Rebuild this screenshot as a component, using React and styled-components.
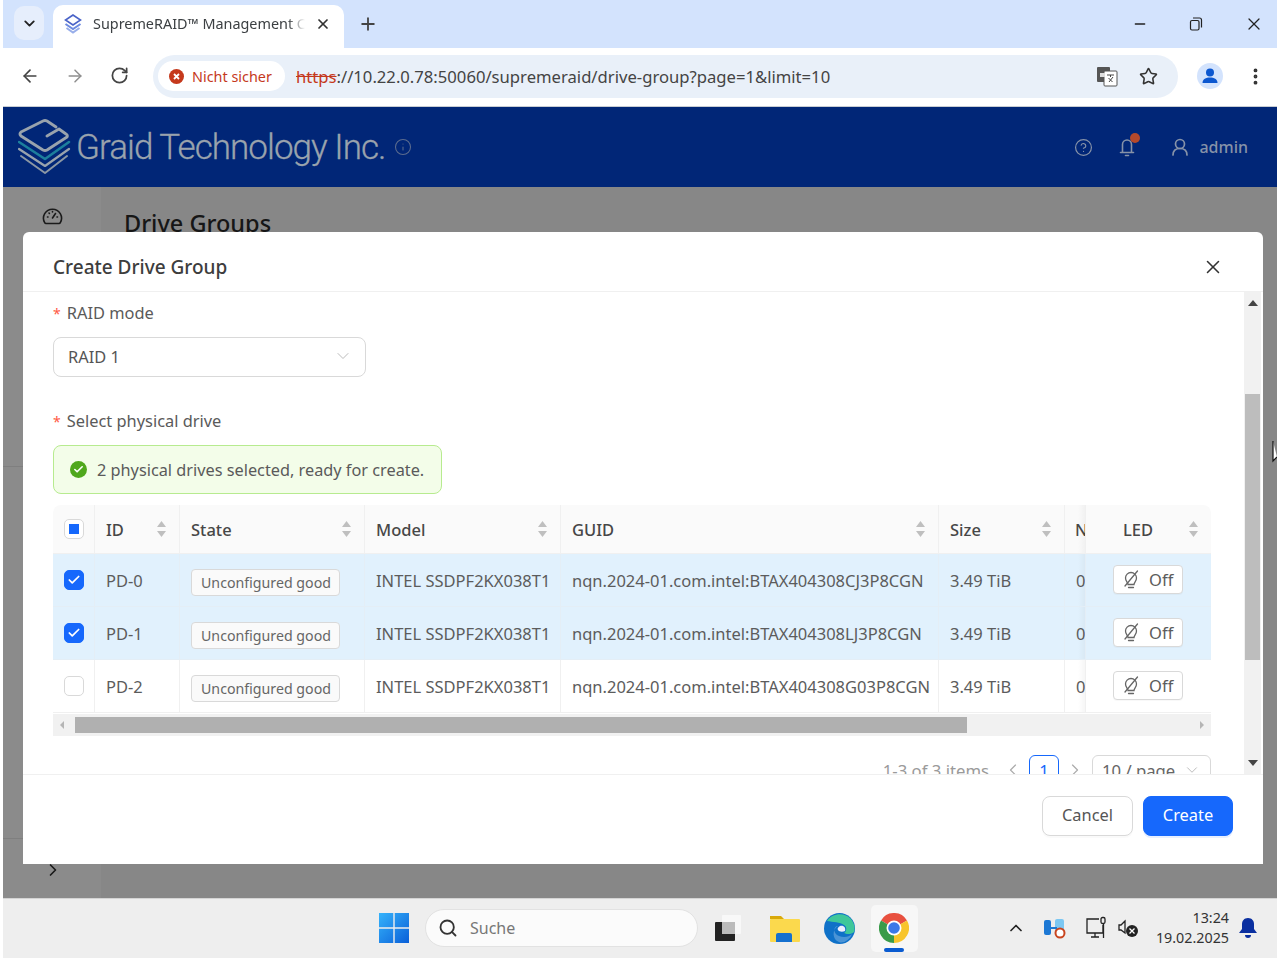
import React from 'react';
import styled, { createGlobalStyle } from 'styled-components';
import { ArrowLeft, ArrowRight, RotateCw, Star, EllipsisVertical, Minus, X, Plus, ChevronDown, ChevronLeft, ChevronUp, ChevronRight, CircleHelp, Search, Check, Info } from 'lucide-react';

const Global = createGlobalStyle`
  html, body { margin: 0; padding: 0; background: #fff; }
  body { font-family: "Noto Sans", "Liberation Sans", sans-serif; color: #333; }
  * { box-sizing: border-box; }
`;

const Screen = styled.div`
  position: relative;
  width: 1277px;
  height: 965px;
  padding: 0 0 7px 3px;
  display: flex;
  flex-direction: column;
  overflow: hidden;
  background: #fff;
`;

/* browser chrome */
const TabStrip = styled.div`
  height: 48px;
  flex: none;
  background: #d3e3fd;
  display: flex;
  align-items: flex-end;
  padding-left: 11px;
`;
const TabListBtn = styled.div`
  width: 30px;
  height: 34px;
  margin: 0 9px 8px 0;
  border-radius: 10px;
  background: #e6eefc;
  display: flex;
  align-items: center;
  justify-content: center;
  color: #222;
`;
const Tab = styled.div`
  width: 291px;
  height: 43px;
  background: #fff;
  border-radius: 10px 10px 0 0;
  display: flex;
  align-items: center;
  padding: 0 0 6px 11px;
  font-size: 14.4px;
  color: #3c4043;
`;
const TabTitle = styled.span`
  margin: 0 10px 0 11px;
  width: 212px;
  white-space: nowrap;
  overflow: hidden;
  -webkit-mask-image: linear-gradient(to right, #000 92%, transparent);
  mask-image: linear-gradient(to right, #000 92%, transparent);
`;
const NewTab = styled.div`
  margin: 0 0 14px 14px;
  color: #444;
  display: flex;
`;
const WindowBtns = styled.div`
  margin-left: auto;
  height: 48px;
  display: flex;
  align-items: center;
  padding-right: 13px;
  gap: 41px;
  color: #222;
`;
const Toolbar = styled.div`
  height: 59px;
  flex: none;
  background: #fff;
  border-bottom: 1px solid #c8cdd4;
  display: flex;
  align-items: center;
  padding: 0 10px 2px 17px;
  color: #474747;
`;
const NavIcons = styled.div`
  display: flex;
  gap: 25px;
  width: 133px;
`;
const NavIcon = styled.span`
  display: flex;
  color: ${p => (p.$dim ? '#8f8f8f' : '#444')};
`;
const Omnibox = styled.div`
  width: 1025px;
  height: 43px;
  border-radius: 22px;
  background: #e9f0f9;
  display: flex;
  align-items: center;
  padding: 0 20px 0 5px;
`;
const Chip = styled.div`
  width: 127px;
  height: 30px;
  border-radius: 15px;
  background: #fff;
  display: flex;
  align-items: center;
  gap: 8px;
  padding-left: 11px;
  font-size: 14.4px;
  color: #c5391c;
  white-space: nowrap;
`;
const Url = styled.div`
  margin-left: 11px;
  font-size: 16.65px;
  color: #444;
  white-space: nowrap;
`;
const Https = styled.span`
  color: #c5391c;
  text-decoration: line-through;
`;
const OmniIcons = styled.div`
  margin-left: auto;
  display: flex;
  align-items: center;
  gap: 21px;
  color: #333;
`;
const Profile = styled.div`
  margin-left: 19px;
  display: flex;
`;
const Kebab = styled.div`
  margin-left: 22px;
  display: flex;
  color: #333;
`;

/* app behind the dialog */
const AppBar = styled.header`
  height: 80px;
  flex: none;
  background: #012677;
  display: flex;
  align-items: center;
  padding: 0 29px 0 15px;
  color: #8692a8;
`;
const Brand = styled.div`
  margin-left: 4px;
  font-family: Roboto, "Liberation Sans", sans-serif;
  font-size: 35px;
  font-weight: 300;
  letter-spacing: -0.95px;
  color: #9aa3ad;
  -webkit-text-stroke: 0.3px #9aa3ad;
  white-space: nowrap;
`;
const BrandInfo = styled.span`
  margin: 0 0 0 8px;
  display: flex;
  color: #5c6c8e;
`;
const AppActions = styled.div`
  margin-left: auto;
  display: flex;
  align-items: center;
  font-size: 16px;
  font-weight: 500;
`;
const BellWrap = styled.span`
  position: relative;
  display: flex;
  margin: 0 36px 0 25px;
`;
const Dot = styled.i`
  position: absolute;
  right: -4px;
  top: -4px;
  width: 10px;
  height: 10px;
  border-radius: 50%;
  background: #b5492b;
`;
const AdminName = styled.span`
  margin-left: 11px;
`;
const Workspace = styled.div`
  flex: 1;
  min-height: 0;
  display: flex;
  background: #878787;
`;
const Sidebar = styled.aside`
  width: 98px;
  background: #8b8b8b;
  display: flex;
  flex-direction: column;
  justify-content: space-between;
  color: #1a1a1a;
`;
const SideTop = styled.div`
  height: 280px;
  border-bottom: 1px solid #7f7f7f;
  padding-top: 19px;
  display: flex;
  justify-content: center;
`;
const SideFoot = styled.div`
  height: 60px;
  border-top: 1px solid #7f7f7f;
  padding: 21px 0 0 2px;
  display: flex;
  justify-content: center;
`;
const PageTitle = styled.h1`
  margin: 21px 0 0 23px;
  font-size: 23.5px;
  font-weight: 500;
  line-height: 30px;
  color: #161616;
`;

/* dialog */
const Modal = styled.div`
  position: absolute;
  left: 23px;
  top: 232px;
  width: 1240px;
  height: 632px;
  background: #fff;
  border-radius: 6px 6px 0 0;
  display: flex;
  flex-direction: column;
  overflow: hidden;
`;
const ModalHead = styled.div`
  height: 60px;
  flex: none;
  border-bottom: 1px solid #f0f0f0;
  display: flex;
  align-items: center;
  justify-content: space-between;
  padding: 10px 39px 0 30px;
  font-size: 19px;
  font-weight: 500;
  color: #3d3d3d;
`;
const ModalBody = styled.div`
  flex: 1;
  min-height: 0;
  display: flex;
`;
const Scroller = styled.div`
  flex: 1;
  min-width: 0;
  overflow: hidden;
  padding: 10px 0 0 30px;
`;
const VBar = styled.div`
  width: 17px;
  margin-right: 2px;
  background: #f1f1f1;
  display: flex;
  flex-direction: column;
  align-items: center;
  justify-content: space-between;
  padding: 8px 0;
  position: relative;
`;
const VThumb = styled.div`
  position: absolute;
  left: 1px;
  top: 102px;
  width: 15px;
  height: 266px;
  background: #bdbdbd;
`;
const Label = styled.div`
  display: flex;
  align-items: baseline;
  gap: 6px;
  font-size: 16.4px;
  line-height: 22px;
  color: #5a5a5a;
  margin-bottom: 12px;
`;
const Star2 = styled.span`
  color: #ff5a45;
  font-size: 14px;
`;
const Select = styled.div`
  width: 313px;
  height: 40px;
  border: 1px solid #d9d9d9;
  border-radius: 8px;
  display: flex;
  align-items: center;
  justify-content: space-between;
  padding: 0 12px 2px 14px;
  font-size: 16.4px;
  color: #555;
  margin-bottom: 33px;
`;
const Alert = styled.div`
  width: 389px;
  height: 49px;
  border: 1px solid #b7eb8f;
  border-radius: 8px;
  background: #f3fde9;
  display: flex;
  align-items: center;
  gap: 10px;
  padding-left: 16px;
  font-size: 16.3px;
  color: #5a5a5a;
  white-space: nowrap;
  margin-bottom: 11px;
`;
const OkDot = styled.span`
  width: 17px;
  height: 17px;
  border-radius: 50%;
  background: #4fa81c;
  color: #fff;
  display: flex;
  align-items: center;
  justify-content: center;
`;
const Table = styled.table`
  width: 1158px;
  table-layout: fixed;
  border-collapse: separate;
  border-spacing: 0;
  font-size: 16.5px;
  color: #5c5c5c;
`;
const Th = styled.th`
  position: relative;
  height: 49px;
  padding: 0 0 0 ${p => p.$pad || 11}px;
  background: #fafafa;
  border-right: 1px solid #f0f0f0;
  border-bottom: 1px solid #f0f0f0;
  font-weight: 500;
  text-align: left;
  color: #474747;
  white-space: nowrap;
  overflow: hidden;
  &:first-child { border-top-left-radius: 8px; }
  &:last-child { border-top-right-radius: 8px; border-right: 0; }
`;
const Td = styled.td`
  position: relative;
  height: 53px;
  padding: 0 0 0 11px;
  background: ${p => (p.$sel ? '#e1f1fd' : '#fff')};
  border-right: 1px solid ${p => (p.$sel ? '#e4eef6' : '#f0f0f0')};
  border-bottom: 1px solid ${p => (p.$sel ? '#e4eef6' : '#f0f0f0')};
  white-space: nowrap;
  overflow: hidden;
  &:last-child { border-right: 0; }
`;
const Fade = styled.i`
  position: absolute;
  right: 0;
  top: 0;
  bottom: 0;
  width: 7px;
  background: linear-gradient(to right, rgba(0, 0, 0, 0), rgba(0, 0, 0, 0.035));
`;
const SortWrap = styled.span`
  position: absolute;
  right: 12px;
  top: 15px;
  display: flex;
`;
const Box = styled.span`
  width: 20px;
  height: 20px;
  border-radius: 5px;
  display: flex;
  align-items: center;
  justify-content: center;
  color: #fff;
  background: ${p => (p.$on ? '#1668fc' : '#fff')};
  border: 1px solid ${p => (p.$on ? '#1668fc' : '#d9d9d9')};
`;
const Partial = styled.i`
  width: 10px;
  height: 10px;
  background: #1668fc;
`;
const Tag = styled.span`
  display: inline-flex;
  align-items: center;
  width: 149px;
  height: 27px;
  padding-left: 9px;
  margin-top: 5px;
  border: 1px solid #d9d9d9;
  border-radius: 4px;
  background: #fafafa;
  font-size: 14.2px;
  color: #666;
`;
const LedBtn = styled.span`
  display: flex;
  align-items: center;
  width: 70px;
  height: 29px;
  margin: -1px 0 0 16px;
  padding-left: 8px;
  gap: 9px;
  border: 1px solid #d9d9d9;
  border-radius: 4px;
  background: #fff;
  box-shadow: 0 1px 1px rgba(0, 0, 0, 0.03);
  color: #5c5c5c;
`;
const HBar = styled.div`
  width: 1158px;
  height: 22px;
  margin-top: 1px;
  background: #f1f1f1;
  display: flex;
  align-items: center;
  padding: 0 6px;
`;
const HThumb = styled.div`
  width: 892px;
  height: 16px;
  margin: 0 auto 0 10px;
  background: #b0b0b0;
`;
const Pager = styled.div`
  margin-top: 19px;
  width: 1158px;
  height: 30px;
  display: flex;
  align-items: center;
  justify-content: flex-end;
  font-size: 16.7px;
  color: #9a9a9a;
`;
const PagePrev = styled(ChevronLeft)`
  margin-left: 14px;
`;
const PageNum = styled.span`
  width: 30px;
  height: 30px;
  margin: 0 6px;
  border: 1px solid #1668fc;
  border-radius: 6px;
  display: flex;
  align-items: center;
  justify-content: center;
  color: #1668fc;
`;
const PageSize = styled.span`
  width: 119px;
  height: 30px;
  margin-left: 7px;
  padding: 0 9px;
  border: 1px solid #d9d9d9;
  border-radius: 6px;
  display: flex;
  align-items: center;
  justify-content: space-between;
  color: #666;
`;
const ModalFoot = styled.div`
  height: 90px;
  flex: none;
  border-top: 1px solid #f0f0f0;
  display: flex;
  justify-content: flex-end;
  gap: 10px;
  padding: 21px 30px 0 0;
`;
const Button = styled.button`
  width: ${p => (p.$primary ? 90 : 91)}px;
  height: 40px;
  padding: 0 0 3px;
  border-radius: 8px;
  border: 1px solid ${p => (p.$primary ? '#1668fc' : '#d9d9d9')};
  background: ${p => (p.$primary ? '#1668fc' : '#fff')};
  color: ${p => (p.$primary ? '#fff' : '#555')};
  box-shadow: 0 2px 0 ${p => (p.$primary ? 'rgba(5,95,255,0.1)' : 'rgba(0,0,0,0.02)')};
  font: 400 16.4px "Noto Sans", sans-serif;
`;

/* taskbar */
const Taskbar = styled.div`
  height: 60px;
  flex: none;
  background: #eeeeee;
  border-top: 1px solid #d4d4d4;
  display: flex;
  align-items: center;
  padding: 0 0 1px 376px;
`;
const Search2 = styled.div`
  width: 273px;
  height: 38px;
  margin-left: 16px;
  border-radius: 19px;
  background: #fbfbfb;
  border: 1px solid #e2e2e2;
  display: flex;
  align-items: center;
  gap: 12px;
  padding-left: 12px;
  font-size: 16px;
  color: #777;
`;
const TaskSlot = styled.div`
  margin-left: ${p => p.$ml}px;
  display: flex;
`;
const ActiveTile = styled.div`
  position: relative;
  width: 47px;
  height: 47px;
  margin-left: 16px;
  border-radius: 5px;
  background: #f7f7f7;
  display: flex;
  align-items: center;
  justify-content: center;
  padding-right: 2px;
  &::after {
    content: '';
    position: absolute;
    left: 13px;
    bottom: 0;
    width: 20px;
    height: 4px;
    border-radius: 2px;
    background: #0a5bd0;
  }
`;
const Tray = styled.div`
  margin-left: auto;
  display: flex;
  align-items: center;
  color: #222;
  padding-right: 19px;
`;
const TrayItem = styled.span`
  margin-left: ${p => p.$ml}px;
  display: flex;
`;
const Clock = styled.div`
  margin: 0 9px 0 18px;
  text-align: right;
  font-size: 14.3px;
  line-height: 20px;
  color: #333;
`;
const Cursor = styled.svg`
  position: absolute;
  left: 1272px;
  top: 440px;
`;

const Sort = () => (
  <SortWrap>
    <svg width="11" height="18" viewBox="0 0 11 18"><path d="M5.5 1 10 7H1z" fill="#bfbfbf" /><path d="M5.5 17 1 11h9z" fill="#bfbfbf" /></svg>
  </SortWrap>
);

const GraidLogo = () => (
  <svg width="54" height="56" viewBox="0 0 54 56" fill="none" strokeLinecap="round" strokeLinejoin="round">
    <path d="M38 8 29 2Q27 1 25 2L3 13Q1 15 3 17L25 31Q27 32 29 31L49 18Q50 16 48 15L41 10 29 17" stroke="#99a3ad" strokeWidth="2.8" />
    <path d="M1 23 27 40 51 23" stroke="#1d7f9c" strokeWidth="2.6" />
    <path d="M1 30 27 47 51 30" stroke="#99a3ad" strokeWidth="2.2" />
    <path d="M3 37 27 54 49 37" stroke="#8b97a4" strokeWidth="2" />
  </svg>
);

const TabLogo = () => (
  <svg width="18" height="20" viewBox="0 0 18 20" fill="none">
    <path d="M9 1 1.5 6 9 11l7.5-5z" stroke="#4a63c8" strokeWidth="1.6" />
    <path d="M1.5 10 9 15l7.5-5" stroke="#6d8be0" strokeWidth="2" />
    <path d="M2.5 14 9 18.5l6.5-4.5" stroke="#98aeea" strokeWidth="2" />
  </svg>
);

const Restore = () => (
  <svg width="14" height="14" viewBox="0 0 14 14" fill="none" stroke="#222" strokeWidth="1.2">
    <rect x="1.5" y="3.5" width="8.5" height="9.5" rx="1.5" />
    <path d="M4 1h6.5A2 2 0 0 1 12.5 3v7.5" />
  </svg>
);

const Translate = () => (
  <svg width="22" height="22" viewBox="0 0 22 22">
    <rect x="1" y="2" width="13" height="15" rx="1" fill="#555" />
    <rect x="8" y="6" width="13" height="15" rx="1" fill="#fff" stroke="#555" />
    <path d="M4 8h5v4H4z" fill="#ddd" />
    <path d="M11 10h7M14.5 10v2M17 12l-4 5M12.5 13l4 4" stroke="#444" strokeWidth="1" fill="none" />
  </svg>
);

const Avatar = () => (
  <svg width="26" height="26" viewBox="0 0 26 26">
    <circle cx="13" cy="13" r="13" fill="#d3e3fd" />
    <circle cx="13" cy="9.5" r="4" fill="#0b57d0" />
    <path d="M5.5 20c0-4 3.5-5.500 7.500-5.500s7.500 1.500 7.500 5.500z" fill="#0b57d0" />
  </svg>
);

const Gauge = () => (
  <svg width="21" height="20" viewBox="0 0 21 20" fill="none" stroke="#1a1a1a" strokeWidth="1.6" strokeLinecap="round">
    <path d="M4 17.500a1.500 1.500 0 0 1-1.300-.8A9 9 0 1 1 18.300 16.700a1.500 1.500 0 0 1-1.300.8z" strokeLinejoin="round" />
    <path d="M10.500 12l3-4.500M5.500 11h.5M15 11h.5M10.500 5.500V6M7 7l.4.4" />
  </svg>
);

const HeaderBell = () => (
  <svg width="18" height="20" viewBox="0 0 18 20" fill="none" stroke="currentColor" strokeWidth="1.6" strokeLinecap="round">
    <path d="M4.500 15V7.500a4.500 4.500 0 0 1 9 0V15" />
    <path d="M2.500 15.500h13M7.500 18.500h3" />
  </svg>
);

const HeaderUser = () => (
  <svg width="16" height="18" viewBox="0 0 16 18" fill="none" stroke="currentColor" strokeWidth="1.7" strokeLinecap="round">
    <circle cx="8" cy="6" r="4.500" />
    <path d="M1 17c0-4.500 3-6.500 7-6.500s7 2 7 6.500" />
  </svg>
);

const LedOff = () => (
  <svg width="18" height="20" viewBox="0 0 18 20" fill="none" stroke="#666" strokeWidth="1.3" strokeLinecap="round">
    <path d="M6 14.500c0-2-2.500-3-2.500-6.500a5.500 5.500 0 0 1 11 0c0 3.500-2.500 4.500-2.500 6.500z" />
    <path d="M6.500 17.500h5M3 16 15.500 1" />
  </svg>
);

const WinLogo = () => (
  <svg width="30" height="30" viewBox="0 0 30 30">
    <defs>
      <linearGradient id="wg" x1="0" y1="0" x2="1" y2="1"><stop offset="0" stopColor="#35b3fb" /><stop offset="1" stopColor="#0a5fd8" /></linearGradient>
    </defs>
    <path d="M0 0h14.300v14.300H0zM15.700 0H30v14.300H15.700zM0 15.700h14.300V30H0zM15.700 15.700H30V30H15.700z" fill="url(#wg)" />
  </svg>
);

const TaskView = () => (
  <svg width="28" height="28" viewBox="0 0 28 28">
    <rect x="8" y="1" width="19" height="19" rx="1" fill="#f8f8f8" />
    <rect x="1" y="8" width="20" height="19" rx="1" fill="#222" />
    <rect x="8" y="8" width="13" height="12" fill="#bbb" />
  </svg>
);

const Folder = () => (
  <svg width="30" height="30" viewBox="0 0 30 30">
    <path d="M0 3h11l3 3H0z" fill="#d9a90a" />
    <rect x="0" y="6" width="30" height="23" rx="1" fill="#fbd94d" />
    <path d="M6 29v-7a2 2 0 0 1 2-2h12a2 2 0 0 1 2 2v7z" fill="#1570cf" />
  </svg>
);

const Edge = () => (
  <svg width="31" height="31" viewBox="0 0 31 31">
    <circle cx="15.500" cy="15.500" r="15.500" fill="#0f71c8" />
    <path d="M3 8C7 1 20-2 27 6c4 5 4 10 3 13-3 3-8 2-10 1 3-2 3-6 0-8-4-3-11-3-17-4z" fill="#3fc79a" />
    <path d="M14 13c-5 0-5 8 1 10 5 2 10 1 13-2-2 6-9 10-13 8-7-2-7-13-1-16z" fill="#fff" opacity="0.25" />
    <path d="M16 13c4-1 6 2 5 5-2 1-6 1-7-1-1-1 0-3 2-4z" fill="#eef" />
  </svg>
);

const ChromeLogo = () => (
  <svg width="30" height="30" viewBox="0 0 30 30">
    <path d="M15 15 2 7.500A15 15 0 0 1 28 7.500z" fill="#e8503f" />
    <path d="M15 15 28 7.500A15 15 0 0 1 15 30z" fill="#f8c52c" />
    <path d="M15 15 15 30A15 15 0 0 1 2 7.500z" fill="#3a9b4a" />
    <circle cx="15" cy="15" r="7.500" fill="#fff" />
    <circle cx="15" cy="15" r="5.800" fill="#3b78e7" />
  </svg>
);

const TrayNet = () => (
  <svg width="24" height="22" viewBox="0 0 24 22">
    <rect x="1" y="3" width="7" height="15" rx="2" fill="#1c78d4" />
    <rect x="12" y="2" width="9" height="13" rx="2" fill="#7cc7f2" />
    <path d="M6 11h8" stroke="#1c78d4" strokeWidth="2" />
    <circle cx="17" cy="16" r="4.500" fill="#fff" stroke="#c9451f" strokeWidth="2" />
  </svg>
);

const TrayMonitor = () => (
  <svg width="22" height="24" viewBox="0 0 22 24" fill="none" stroke="#222" strokeWidth="1.3">
    <path d="M14 3H2v14h16V9" />
    <path d="M6 21h8M10 17v4M18.500 8v14" />
    <rect x="16" y="1.500" width="4" height="6" rx="1.500" />
  </svg>
);

const TraySound = () => (
  <svg width="20" height="20" viewBox="0 0 20 20">
    <path d="M7 3 3 7H1v5h2l4 3z" fill="none" stroke="#222" strokeWidth="1.300" />
    <circle cx="14" cy="13" r="6" fill="#222" />
    <path d="M11.500 10.500l5 5M16.500 10.500l-5 5" stroke="#fff" strokeWidth="1.300" />
  </svg>
);

const rows = [
  { id: 'PD-0', guid: 'nqn.2024-01.com.intel:BTAX404308CJ3P8CGN', sel: true },
  { id: 'PD-1', guid: 'nqn.2024-01.com.intel:BTAX404308LJ3P8CGN', sel: true },
  { id: 'PD-2', guid: 'nqn.2024-01.com.intel:BTAX404308G03P8CGN', sel: false },
];

export default function App() {
  return (
    <Screen>
      <Global />
      <TabStrip>
        <TabListBtn><ChevronDown size={17} strokeWidth={2.6} /></TabListBtn>
        <Tab>
          <TabLogo />
          <TabTitle>SupremeRAID™ Management Console</TabTitle>
          <X size={16} strokeWidth={2.6} color="#333" />
        </Tab>
        <NewTab><Plus size={20} strokeWidth={2.2} /></NewTab>
        <WindowBtns>
          <Minus size={16} strokeWidth={2} />
          <Restore />
          <X size={20} strokeWidth={1.5} />
        </WindowBtns>
      </TabStrip>
      <Toolbar>
        <NavIcons>
          <NavIcon><ArrowLeft size={20} strokeWidth={2} /></NavIcon>
          <NavIcon $dim><ArrowRight size={20} strokeWidth={1.8} /></NavIcon>
          <NavIcon><RotateCw size={19} strokeWidth={2.2} /></NavIcon>
        </NavIcons>
        <Omnibox>
          <Chip>
            <svg width="15" height="15" viewBox="0 0 15 15"><circle cx="7.500" cy="7.500" r="7.500" fill="#c5391c" /><path d="M5 5l5 5M10 5l-5 5" stroke="#fff" strokeWidth="1.800" /></svg>
            Nicht sicher
          </Chip>
          <Url><Https>https</Https>://10.22.0.78:50060/supremeraid/drive-group?page=1&amp;limit=10</Url>
          <OmniIcons>
            <Translate />
            <Star size={19} strokeWidth={2} />
          </OmniIcons>
        </Omnibox>
        <Profile><Avatar /></Profile>
        <Kebab><EllipsisVertical size={21} strokeWidth={2.4} /></Kebab>
      </Toolbar>
      <AppBar>
        <GraidLogo />
        <Brand>Graid Technology Inc.</Brand>
        <BrandInfo><Info size={18} strokeWidth={1.4} /></BrandInfo>
        <AppActions>
          <CircleHelp size={19} strokeWidth={1.5} />
          <BellWrap><HeaderBell /><Dot /></BellWrap>
          <HeaderUser />
          <AdminName>admin</AdminName>
        </AppActions>
      </AppBar>
      <Workspace>
        <Sidebar>
          <SideTop><Gauge /></SideTop>
          <SideFoot><ChevronRight size={20} strokeWidth={2} /></SideFoot>
        </Sidebar>
        <PageTitle>Drive Groups</PageTitle>
      </Workspace>
      <Taskbar>
        <WinLogo />
        <Search2><Search size={20} strokeWidth={2.2} color="#333" />Suche</Search2>
        <TaskSlot $ml={16}><TaskView /></TaskSlot>
        <TaskSlot $ml={28}><Folder /></TaskSlot>
        <TaskSlot $ml={24}><Edge /></TaskSlot>
        <ActiveTile><ChromeLogo /></ActiveTile>
        <Tray>
          <ChevronUp size={20} strokeWidth={2} />
          <TrayItem $ml={17}><TrayNet /></TrayItem>
          <TrayItem $ml={18}><TrayMonitor /></TrayItem>
          <TrayItem $ml={11}><TraySound /></TrayItem>
          <Clock>13:24<br />19.02.2025</Clock>
          <svg width="20" height="22" viewBox="0 0 20 22"><path d="M10 1c-4 0-6 3-6 6v5l-3 4h18l-3-4V7c0-3-2-6-6-6z" fill="#0a2fa0" /><path d="M7 18a3 3 0 0 0 6 0z" fill="#0a2fa0" /></svg>
        </Tray>
      </Taskbar>

      <Modal>
        <ModalHead>
          Create Drive Group
          <X size={22} strokeWidth={1.7} color="#333" />
        </ModalHead>
        <ModalBody>
          <Scroller>
            <Label><Star2>*</Star2>RAID mode</Label>
            <Select>RAID 1<ChevronDown size={20} strokeWidth={1.1} color="#b5b5b5" /></Select>
            <Label><Star2>*</Star2>Select physical drive</Label>
            <Alert>
              <OkDot><Check size={11} strokeWidth={3.5} /></OkDot>
              2 physical drives selected, ready for create.
            </Alert>
            <Table>
              <colgroup>
                <col width="42" /><col width="85" /><col width="185" /><col width="196" /><col width="378" /><col width="126" /><col width="21" /><col width="125" />
              </colgroup>
              <thead>
                <tr>
                  <Th><Box><Partial /></Box></Th>
                  <Th>ID<Sort /></Th>
                  <Th>State<Sort /></Th>
                  <Th>Model<Sort /></Th>
                  <Th>GUID<Sort /></Th>
                  <Th>Size<Sort /></Th>
                  <Th $pad={10}>N<Fade /></Th>
                  <Th $pad={37}>LED<Sort /></Th>
                </tr>
              </thead>
              <tbody>
                {rows.map(r => (
                  <tr key={r.id}>
                    <Td $sel={r.sel}><Box $on={r.sel}>{r.sel && <Check size={14} strokeWidth={3} />}</Box></Td>
                    <Td $sel={r.sel}>{r.id}</Td>
                    <Td $sel={r.sel}><Tag>Unconfigured good</Tag></Td>
                    <Td $sel={r.sel}>INTEL SSDPF2KX038T1</Td>
                    <Td $sel={r.sel}>{r.guid}</Td>
                    <Td $sel={r.sel}>3.49 TiB</Td>
                    <Td $sel={r.sel}>0<Fade /></Td>
                    <Td $sel={r.sel}><LedBtn><LedOff />Off</LedBtn></Td>
                  </tr>
                ))}
              </tbody>
            </Table>
            <HBar>
              <svg width="6" height="10" viewBox="0 0 6 10"><path d="M5 1v8L1 5z" fill="#b5b5b5" /></svg>
              <HThumb />
              <svg width="6" height="10" viewBox="0 0 6 10"><path d="M1 1v8l4-4z" fill="#b5b5b5" /></svg>
            </HBar>
            <Pager>
              1-3 of 3 items
              <PagePrev size={20} strokeWidth={1.4} color="#aaa" />
              <PageNum>1</PageNum>
              <ChevronRight size={20} strokeWidth={1.4} color="#aaa" />
              <PageSize>10 / page<ChevronDown size={18} strokeWidth={1.2} color="#b5b5b5" /></PageSize>
            </Pager>
          </Scroller>
          <VBar>
            <svg width="10" height="6" viewBox="0 0 10 6"><path d="M5 0l5 6H0z" fill="#444" /></svg>
            <VThumb />
            <svg width="10" height="6" viewBox="0 0 10 6"><path d="M5 6 0 0h10z" fill="#444" /></svg>
          </VBar>
        </ModalBody>
        <ModalFoot>
          <Button>Cancel</Button>
          <Button $primary>Create</Button>
        </ModalFoot>
      </Modal>
      <Cursor width="5" height="24" viewBox="0 0 5 24"><path d="M1 1v20l4-4" fill="#fff" stroke="#111" strokeWidth="1.200" /></Cursor>
    </Screen>
  );
}
